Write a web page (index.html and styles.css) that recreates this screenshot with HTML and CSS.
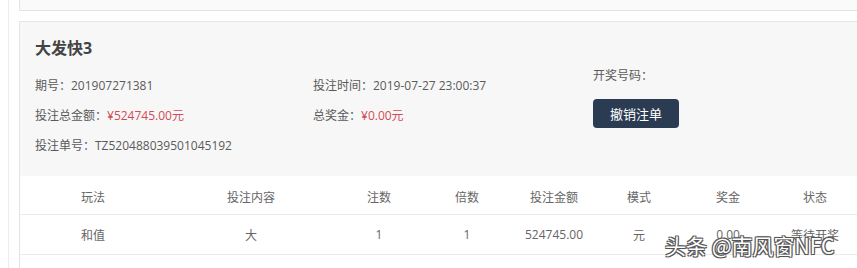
FILE: index.html
```html
<!DOCTYPE html>
<html lang="zh-CN">
<head>
  <meta charset="UTF-8" />
  <meta name="viewport" content="width=device-width, initial-scale=1.0" />
  <title>投注详情</title>
  <link rel="stylesheet" href="styles.css">
</head>
<body>
  <div class="page">
    <div class="card-prev"></div>
    <div class="card">
      <div class="info">
        <h2>大发快3</h2>
        <div class="info-grid">
          <div class="col">
            <p>期号：201907271381</p>
            <p>投注总金额：<span class="red">¥524745.00元</span></p>
            <p>投注单号：TZ520488039501045192</p>
          </div>
          <div class="col">
            <p>投注时间：2019-07-27 23:00:37</p>
            <p>总奖金：<span class="red">¥0.00元</span></p>
          </div>
          <div class="col col-draw">
            <p>开奖号码：</p>
            <button class="button" type="button">撤销注单</button>
          </div>
        </div>
      </div>
      <div class="table">
        <div class="row head">
          <span>玩法</span><span>投注内容</span><span>注数</span><span>倍数</span>
          <span>投注金额</span><span>模式</span><span>奖金</span><span>状态</span>
        </div>
        <div class="row">
          <span>和值</span><span>大</span><span>1</span><span>1</span>
          <span>524745.00</span><span>元</span><span>0.00</span><span>等待开奖</span>
        </div>
      </div>
    </div>
  </div>
  <div class="watermark">头条 @南风窗NFC</div>
</body>
</html>
```

FILE: styles.css
```css
:root {
  --line: #e4e4e4;
  --text-color: #5a5a5a;
  --red: #d04b55;
  --dark: #2b3c52;
}

body {
  margin: 0;
  background: #fff;
  font-family: "Open Sans", "Noto Sans CJK SC", sans-serif;
  color: var(--text-color);
  font-size: 12px;
  overflow: hidden;
}

.page {
  display: flex;
  flex-direction: column;
  margin-left: 8px;
  border-left: 1px solid #ececec;
  padding-left: 10px;
  height: 268px;
}

.card-prev {
  height: 10px;
  flex: none;
  background: #fafafa;
  border-left: 1px solid var(--line);
  border-bottom: 1px solid var(--line);
  margin-bottom: 10px;
}

.card {
  flex: 1;
  border-top: 1px solid var(--line);
  border-left: 1px solid var(--line);
}

.info {
  background: #f7f7f7;
  padding: 16px 15px 15px;
}

h2 {
  margin: 0 0 1px;
  font-size: 16px;
  line-height: 20px;
  color: #444;
  font-weight: bold;
}

.info-grid {
  display: grid;
  grid-template-columns: 278px 280px 1fr;
}

.col {
  padding-top: 12px;
}

.col p {
  margin: 0;
  line-height: 30px;
  white-space: nowrap;
}

.col-draw {
  padding-top: 2px;
}

.red {
  color: var(--red);
}

.button {
  margin-top: 8px;
  width: 86px;
  height: 29px;
  border: none;
  border-radius: 4px;
  background: var(--dark);
  color: #fff;
  font-family: "Noto Sans CJK SC", sans-serif;
  font-size: 13px;
  padding: 0;
}

.table {
  background: #fff;
  color: #666;
}

.row {
  display: grid;
  grid-template-columns: 146px 170px 86px 90px 84px 86px 92px 82px;
  border-bottom: 1px solid #ebebeb;
  height: 40px;
  box-sizing: border-box;
  align-items: center;
  text-align: center;
}

.row.head {
  height: 39px;
  padding-top: 3px;
}

.watermark {
  position: absolute;
  left: 665px;
  top: 231px;
  font-family: "Noto Sans CJK SC", sans-serif;
  font-size: 21px;
  line-height: 28px;
  color: #fff;
  text-shadow: -1px -1px 0 #555, 1px -1px 0 #555, -1px 1px 0 #555, 1px 1px 0 #555, 0 0 2px #333;
  white-space: nowrap;
}
```
